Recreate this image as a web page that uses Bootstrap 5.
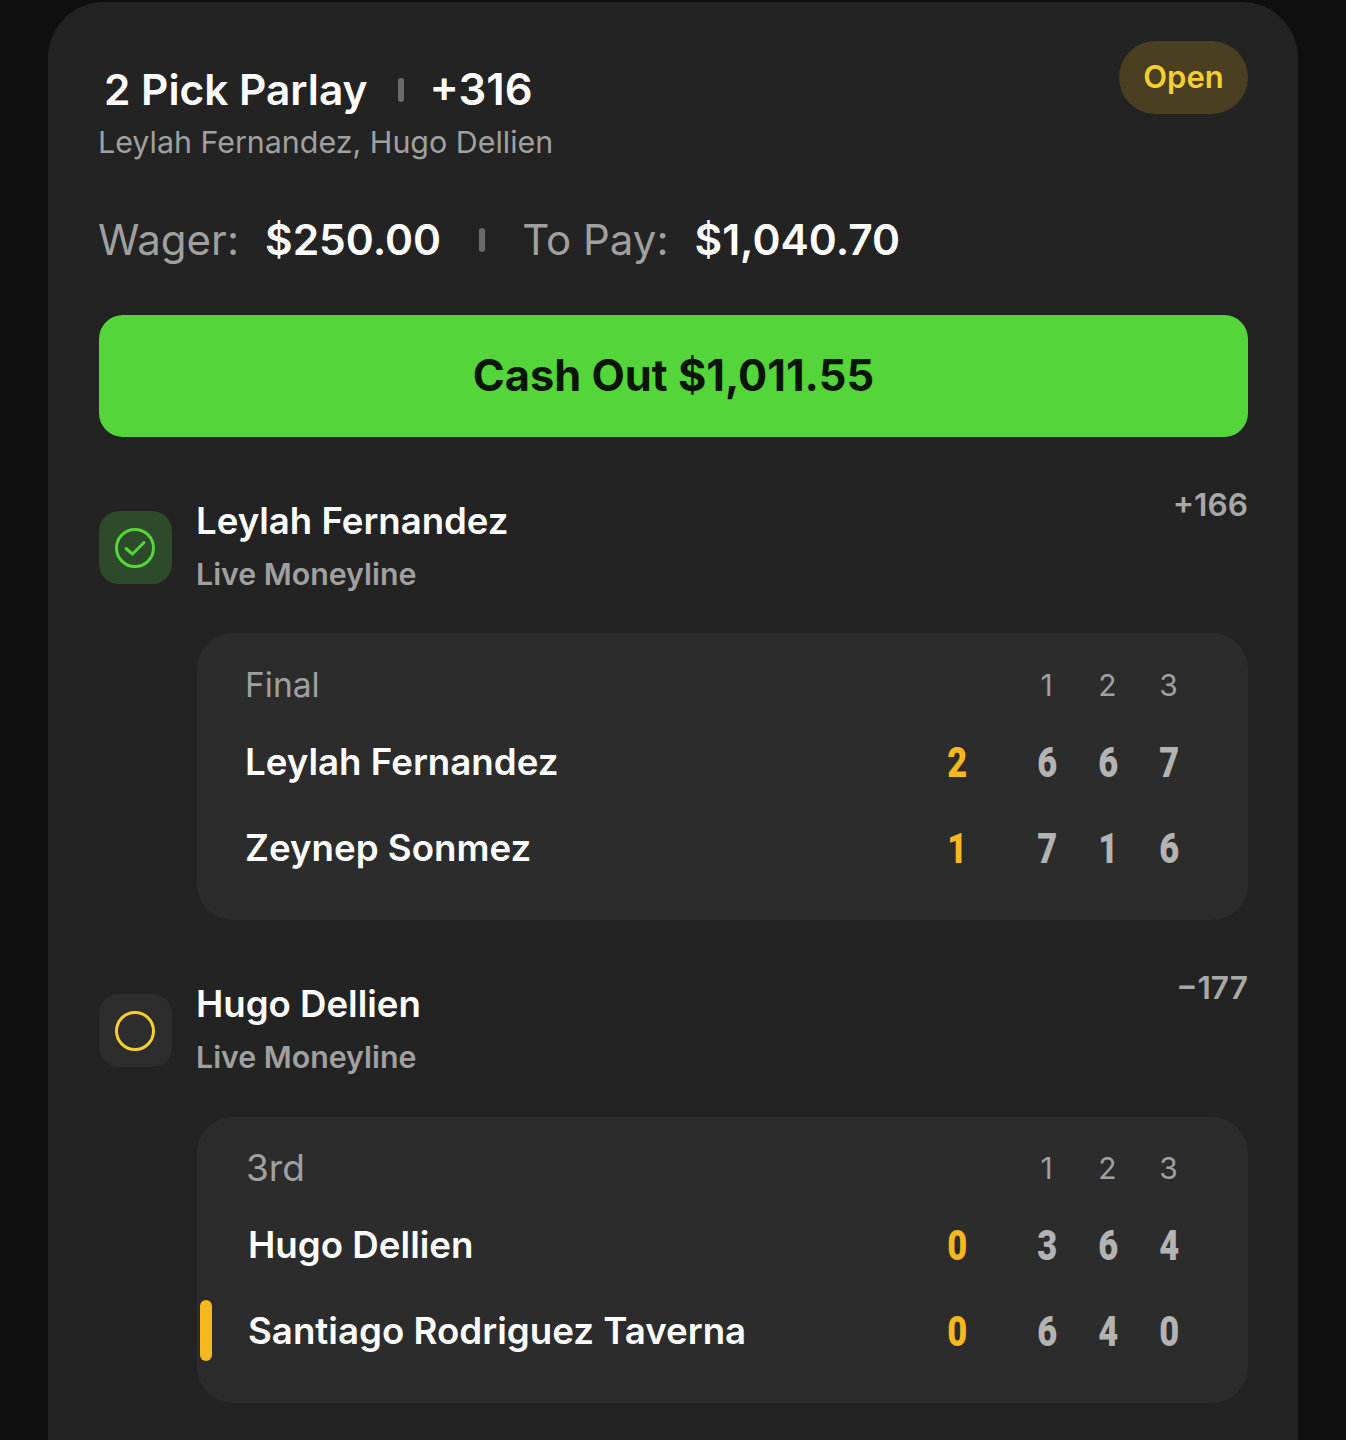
<!DOCTYPE html>
<html lang="en"><head><meta charset="utf-8"><title>Bet</title>
<link href="https://cdn.jsdelivr.net/npm/bootstrap@5.3.0/dist/css/bootstrap.min.css" rel="stylesheet">
<style>
html,body{height:1440px;overflow:hidden}
body{background:#0f0f0f;font-family:Inter,"Liberation Sans",sans-serif;color:#fff;padding:2px 48px 0 48px}
.slip{background:#232323;border-radius:56px 56px 0 0;height:1438px;padding:39px 50px 0 51px}
.ttl{font-size:42.4px;font-weight:600;line-height:50px;padding:24px 0 0 5px}
.ttl-odds{font-size:43.6px}
.sep{width:6px;height:24px;border-radius:3px;background:#6a6a6a}
.sep-t{margin:0 26px 0 30px}
.sep-w{margin:0 37px 0 38px}
.subt{font-size:30.4px;color:#a0a0a0;line-height:38px;margin:8px 0 0 -1px}
.pill{width:129px;height:73px;border-radius:37px;background:#4a4021;color:#f3cf2f;font-size:31px;font-weight:600}
.wager{font-size:42px;line-height:52px;margin:53px 0 0 -1px;color:#a0a0a0}
.wager b{color:#fff;font-weight:600;font-size:42.5px;margin-left:26px}
.cash,.cash:hover{height:122px;border-radius:24px;background:#54d63a;color:#0a1506;font-size:43.3px;font-weight:700;margin-top:49px;border:0;width:100%;padding-bottom:8px}
.sect{margin-top:49px}
.pick{gap:24px}
.ico{width:73px;height:73px;border-radius:20px;flex:none;margin-top:25px}
.ico svg{margin-right:2px}
.ico-w{background:#2d4a2a}.ico-o{background:#2d2d2d}
.pinfo{padding-top:13px}
.pname{font-size:36.6px;font-weight:600;line-height:44px}
.pmkt{font-size:30.3px;font-weight:600;color:#a0a0a0;line-height:40px;margin-top:11px}
.odds{font-size:31.7px;font-weight:600;color:#a8a8a8;line-height:38px}
.box{background:#2c2c2c;border-radius:36px;margin:39px 0 0 98px;height:287px;position:relative;padding:32px 48px 0 48px}
.box-b{margin-top:40px;height:286px;padding-top:31px}
.rowh{height:40px;font-size:33.5px;color:#a0a0a0;padding-right:1px}
.rowh-b{font-size:37px;padding-left:1px}
.rowp{height:86px;font-size:36.7px;font-weight:600}
.rowp-1{margin-top:14px}
.nm{flex:1}
.cell{width:61px;text-align:center;font-size:30px;font-weight:400}
.tot,.sc{text-align:center;font-family:Roboto,"Liberation Sans",sans-serif;font-weight:900;font-size:42px}
.tot{width:119px;color:#f5b81e}
.sc{width:61px;color:#b3b3b3}
.nrw{display:inline-block;transform:scaleX(.82)}
.mrk{position:absolute;left:3px;top:183px;width:12px;height:61px;border-radius:6px;background:#f5b81e}
.shift{padding-left:3px}
</style></head><body>
<main class="slip">
<div class="d-flex justify-content-between align-items-start">
 <div>
  <div class="ttl d-flex align-items-center"><span>2 Pick Parlay</span><span class="sep sep-t"></span><span class="ttl-odds">+316</span></div>
  <div class="subt">Leylah Fernandez, Hugo Dellien</div>
 </div>
 <div class="pill d-flex align-items-center justify-content-center">Open</div>
</div>
<div class="wager d-flex align-items-center"><span>Wager:</span><b>$250.00</b><span class="sep sep-w"></span><span>To Pay:</span><b>$1,040.70</b></div>
<button type="button" class="btn cash d-flex align-items-center justify-content-center">Cash Out $1,011.55</button>

<section class="sect">
 <div class="d-flex pick">
  <div class="ico ico-w d-flex align-items-center justify-content-center"><svg width="42" height="42" viewBox="0 0 42 42" fill="none" stroke="#54d63a" stroke-width="3" stroke-linecap="round" stroke-linejoin="round"><circle cx="21" cy="21" r="18.5"/><path d="M12 21.5l6.5 5.5L30 15.5"/></svg></div>
  <div class="flex-grow-1 pinfo"><div class="pname">Leylah Fernandez</div><div class="pmkt">Live Moneyline</div></div>
  <div class="odds">+166</div>
 </div>
 <div class="box">
  <div class="d-flex align-items-center rowh"><span class="nm">Final</span><span class="cell">1</span><span class="cell">2</span><span class="cell">3</span></div>
  <div class="d-flex align-items-center rowp rowp-1"><span class="nm">Leylah Fernandez</span><span class="tot"><span class="nrw">2</span></span><span class="sc"><span class="nrw">6</span></span><span class="sc"><span class="nrw">6</span></span><span class="sc"><span class="nrw">7</span></span></div>
  <div class="d-flex align-items-center rowp"><span class="nm">Zeynep Sonmez</span><span class="tot"><span class="nrw">1</span></span><span class="sc"><span class="nrw">7</span></span><span class="sc"><span class="nrw">1</span></span><span class="sc"><span class="nrw">6</span></span></div>
 </div>
</section>

<section class="sect">
 <div class="d-flex pick">
  <div class="ico ico-o d-flex align-items-center justify-content-center"><svg width="42" height="42" viewBox="0 0 42 42" fill="none" stroke="#f3cf2f" stroke-width="3"><circle cx="21" cy="21" r="18.5"/></svg></div>
  <div class="flex-grow-1 pinfo"><div class="pname">Hugo Dellien</div><div class="pmkt">Live Moneyline</div></div>
  <div class="odds">−177</div>
 </div>
 <div class="box box-b">
  <div class="d-flex align-items-center rowh rowh-b"><span class="nm">3rd</span><span class="cell">1</span><span class="cell">2</span><span class="cell">3</span></div>
  <div class="d-flex align-items-center rowp rowp-1 shift"><span class="nm">Hugo Dellien</span><span class="tot"><span class="nrw">0</span></span><span class="sc"><span class="nrw">3</span></span><span class="sc"><span class="nrw">6</span></span><span class="sc"><span class="nrw">4</span></span></div>
  <div class="d-flex align-items-center rowp shift"><span class="nm">Santiago Rodriguez Taverna</span><span class="tot"><span class="nrw">0</span></span><span class="sc"><span class="nrw">6</span></span><span class="sc"><span class="nrw">4</span></span><span class="sc"><span class="nrw">0</span></span></div>
  <span class="mrk"></span>
 </div>
</section>
</main>
</body></html>
